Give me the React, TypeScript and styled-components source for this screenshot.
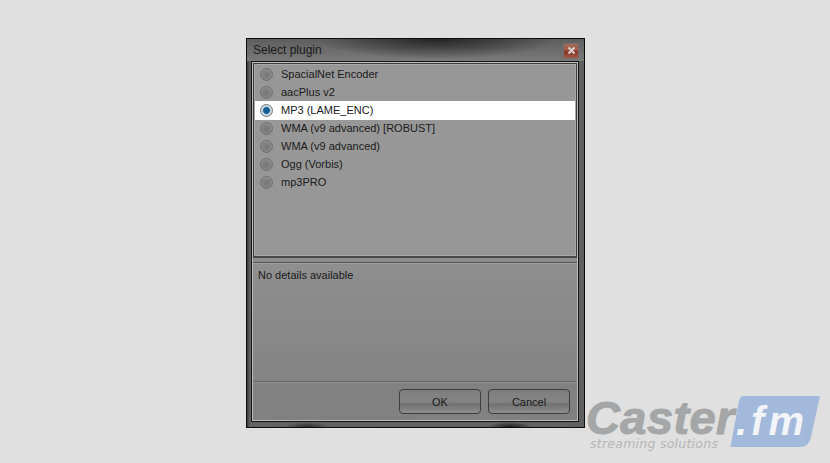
import React from "react";
import styled, { createGlobalStyle } from "styled-components";

const Global = createGlobalStyle`
  html, body { margin: 0; padding: 0; }
  body { background: #e0e0e0; width: 830px; height: 463px; overflow: hidden; position: relative; font-family: "Liberation Sans", Arial, sans-serif; }
`;

const Page = styled.div`
  width: 830px;
  height: 463px;
  padding: 38px 0 0 246px;
  box-sizing: border-box;
  position: relative;
`;

const Window = styled.div`
  width: 339px;
  height: 390px;
  box-sizing: border-box;
  border: 1px solid #0c0c0c;
  display: flex;
  flex-direction: column;
  padding: 0 5px 5px 4px;
  background:
    radial-gradient(ellipse 22px 5px at 263px 100%, #1c1c1c 0%, rgba(28,28,28,0) 100%),
    radial-gradient(ellipse 22px 5px at 60px 100%, #2a2a2a 0%, rgba(42,42,42,0) 100%),
    linear-gradient(90deg, #383838 0, #636363 3px, #606060 100%);
`;

const TitleBar = styled.div`
  height: 22px;
  margin: 0 -5px 0 -4px;
  padding: 0 6px;
  display: flex;
  align-items: center;
  justify-content: space-between;
  background:
    radial-gradient(ellipse 120px 20px at 190px 0, rgba(30,30,30,0.9) 0%, rgba(30,30,30,0) 100%),
    linear-gradient(180deg, #5e5e5e, #7a7a7a);
`;

const Title = styled.span`
  font-size: 12px;
  margin-top: -1px;
  color: #1a1a1a;
`;

const CloseButton = styled.div`
  width: 16px;
  height: 16px;
  box-sizing: border-box;
  border: 1px solid #75706c;
  border-radius: 2px;
  margin: 1px -1px 0 0;
  display: flex;
  align-items: center;
  justify-content: center;
  background: linear-gradient(180deg, #a06a58 0, #a35a48 40%, #8a3426 56%, #a05a48 100%);
`;

const Client = styled.div`
  flex: 1;
  display: flex;
  flex-direction: column;
  border: 1px solid #141414;
  box-sizing: border-box;
  background: #8c8c8c;
  padding: 1px;
  box-shadow: inset 0 0 0 1px #bcbcbc;
`;

const List = styled.div`
  height: 195px;
  box-sizing: border-box;
  border: 1px solid #3e3e3e;
  border-bottom: 2px solid #4a4a4a;
  box-shadow: inset 0 0 0 1px #a8a8a8;
  background: #979797;
  padding: 1px 1px 0;
  display: flex;
  flex-direction: column;
`;

const Row = styled.div<{ $selected?: boolean }>`
  height: 18px;
  display: flex;
  align-items: center;
  gap: 8px;
  padding-left: 5px;
  font-size: 11px;
  color: #1a1a1a;
  background: ${(p) => (p.$selected ? "#fff" : "transparent")};
  box-shadow: ${(p) => (p.$selected ? "0 1px 0 #fff" : "none")};
`;

const Radio = styled.span<{ $selected?: boolean }>`
  width: 13px;
  height: 13px;
  border-radius: 50%;
  box-sizing: border-box;
  flex: none;
  border: 1px solid ${(p) => (p.$selected ? "#6a7680" : "#6e6e6e")};
  background: ${(p) =>
    p.$selected
      ? "radial-gradient(circle at 50% 50%, #0c5388 0, #1a6498 38%, #7ea6c4 46%, #dfe4e8 58%, #b4b8bc 100%)"
      : "radial-gradient(circle at 50% 55%, #767676 0, #828282 50%, #a4a4a4 100%)"};
`;

const Details = styled.div`
  flex: 1;
  margin-top: 4px;
  border-top: 1px solid #555;
  box-shadow: inset 0 1px 0 #a0a0a0;
  background: linear-gradient(180deg, #8f8f8f 0, #848484 100%);
  padding: 6px 5px;
  font-size: 11px;
  color: #1a1a1a;
`;

const Footer = styled.div`
  height: 39px;
  border-top: 1px solid #666;
  box-shadow: inset 0 1px 0 #8e8e8e;
  box-sizing: border-box;
  background: #818181;
  display: flex;
  justify-content: flex-end;
  gap: 7px;
  padding: 7px 7px 0 0;
`;

const Button = styled.div`
  width: 82px;
  height: 25px;
  box-sizing: border-box;
  border: 1px solid #3e3e3e;
  border-radius: 4px;
  display: flex;
  align-items: center;
  justify-content: center;
  font-size: 11px;
  color: #1a1a1a;
  background: linear-gradient(180deg, #7e7e7e 0, #848484 50%, #727272 62%, #8e8e8e 100%);
`;

const Logo = styled.div`
  position: absolute;
  left: 587px;
  top: 395px;
  width: 236px;
  height: 58px;
`;

const LogoName = styled.span`
  position: absolute;
  left: -1px;
  top: 5px;
  font: italic bold 47px/36px "Liberation Sans", sans-serif;
  letter-spacing: 0.4px;
  color: #a4a6a7;
  -webkit-text-stroke: 1px #a4a6a7;
`;

const LogoBadge = styled.svg`
  position: absolute;
  left: 143px;
  top: 0;
`;

const LogoFm = styled.span`
  position: absolute;
  left: 149px;
  top: 11px;
  font: italic bold 40px/30px "Liberation Sans", sans-serif;
  letter-spacing: 4px;
  color: #f2f4f7;
`;

const LogoTag = styled.span`
  position: absolute;
  left: 3px;
  top: 43px;
  font: italic 12.5px/12px "DejaVu Sans", sans-serif;
  letter-spacing: 0.25px;
  color: #b4b6b7;
`;

const plugins = [
  "SpacialNet Encoder",
  "aacPlus v2",
  "MP3 (LAME_ENC)",
  "WMA (v9 advanced) [ROBUST]",
  "WMA (v9 advanced)",
  "Ogg (Vorbis)",
  "mp3PRO",
];

export default function App() {
  return (
    <Page>
      <Global />
      <Window>
        <TitleBar>
          <Title>Select plugin</Title>
          <CloseButton>
            <svg width="9" height="9" viewBox="0 0 9 9">
              <path d="M1.5 1.5 7.5 7.5M7.5 1.5 1.5 7.5" stroke="#d8d2d0" strokeWidth="2" />
            </svg>
          </CloseButton>
        </TitleBar>
        <Client>
          <List>
            {plugins.map((name, i) => (
              <Row key={name} $selected={i === 2}>
                <Radio $selected={i === 2} />
                {name}
              </Row>
            ))}
          </List>
          <Details>No details available</Details>
          <Footer>
            <Button>OK</Button>
            <Button>Cancel</Button>
          </Footer>
        </Client>
      </Window>
      <Logo>
        <LogoBadge width="90" height="53" viewBox="0 0 90 53">
          <path d="M14 1H90L81 42Q79 52 70 52H1Q0 52 1 49L9 6Q10 1 14 1Z" fill="#a3b9dc" />
        </LogoBadge>
        <LogoName>Caster</LogoName>
        <LogoFm>.fm</LogoFm>
        <LogoTag>streaming solutions</LogoTag>
      </Logo>
    </Page>
  );
}
